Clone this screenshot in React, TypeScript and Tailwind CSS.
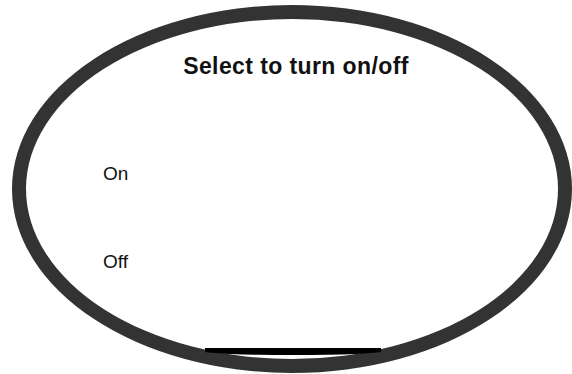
import React, { useState } from "react";

export default function App() {
  const [value, setValue] = useState<"on" | "off" | null>(null);

  return (
    <div className="w-[572px] h-[374px] bg-white overflow-hidden pt-[5px] pl-[12px]" style={{ fontFamily: '"Liberation Sans", Arial, sans-serif' }}>
      {/* Oval frame */}
      <div className="relative w-[560px] h-[368px] rounded-[50%] border-[14px] border-[#333333] flex flex-col">
        <h1 className="mt-[33px] text-center text-[23px] leading-[28px] font-bold tracking-[0.4px] text-[#111111] pl-[8px]">
          Select to turn on/off
        </h1>

        <div className="mt-[82px] pl-[77px] flex flex-col gap-[64px]">
          <button
            onClick={() => setValue("on")}
            className="text-left text-[19px] leading-[24px] text-[#111111] w-fit"
          >
            On
          </button>
          <button
            onClick={() => setValue("off")}
            className="text-left text-[19px] leading-[24px] text-[#111111] w-fit"
          >
            Off
          </button>
        </div>

        {/* inner dark arc near bottom edge */}
        <div className="absolute left-[179px] top-[329px] w-[176px] h-[7px] bg-black rounded-b-[50%]" />
        {value && <span className="sr-only">{value}</span>}
      </div>
    </div>
  );
}
